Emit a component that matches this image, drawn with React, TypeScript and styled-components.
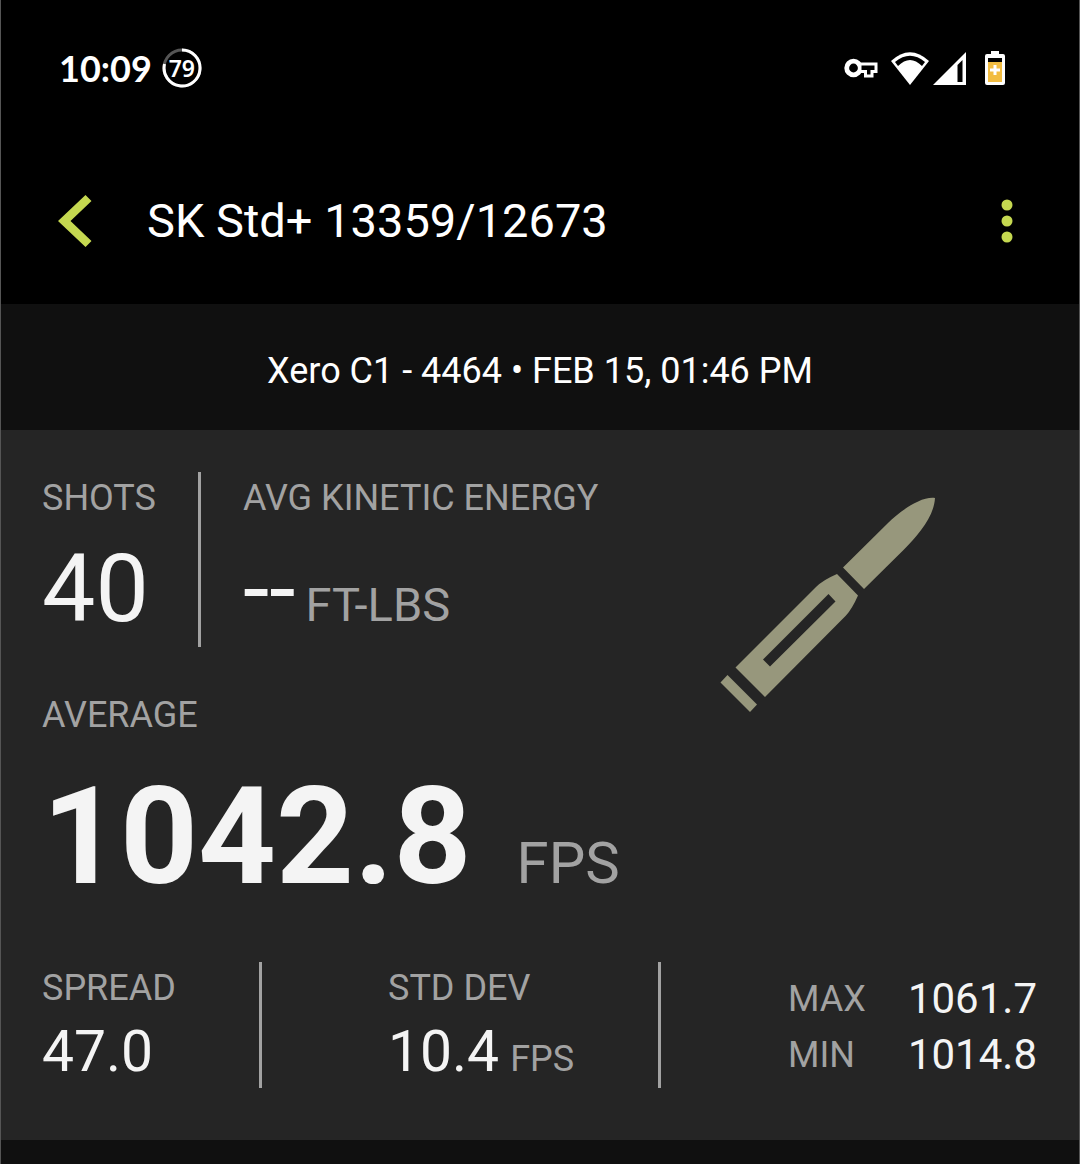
import React from "react";
import styled, { createGlobalStyle, css } from "styled-components";

const GlobalStyle = createGlobalStyle`
  *, *::before, *::after { box-sizing: border-box; }
  body {
    margin: 0;
    background: #101010;
    color: #fff;
    font-family: Roboto, "Liberation Sans", sans-serif;
  }
`;

const Screen = styled.div`
  min-height: 100vh;
  border: solid #555;
  border-width: 0 1px;
`;

const StatusBar = styled.header`
  display: flex;
  align-items: center;
  justify-content: space-between;
  height: 138px;
  padding: 0 74px 2px 58px;
  background: #000;
`;

const StatusGroup = styled.div<{ $gap: number }>`
  display: flex;
  align-items: center;
  gap: ${(p) => p.$gap}px;
`;

const Clock = styled.time`
  font: 700 36px/40px Lato, sans-serif;
`;

const BatteryRing = styled.div`
  display: grid;
  place-items: center;
  width: 40px;
  height: 40px;

  > * { grid-area: 1 / 1; }
`;

const RingLabel = styled.span`
  font: 600 23px/24px "Noto Sans", sans-serif;
`;

const AppBar = styled.nav`
  display: flex;
  align-items: center;
  height: 166px;
  padding: 0 55px 0 57px;
  background: #000;
`;

const IconButton = styled.button`
  display: grid;
  place-items: center;
  width: 34px;
  height: 64px;
  padding: 0;
  border: 0;
  background: none;
  color: #c5d850;
  cursor: pointer;
`;

const Title = styled.h1`
  flex: 1;
  margin: 0;
  padding-left: 55px;
  font-size: 47px;
  line-height: 56px;
  font-weight: 400;
`;

const SessionBar = styled.p`
  margin: 0;
  padding: 46px 42px 38px;
  background: #101010;
  font-size: 36px;
  line-height: 42px;
  text-align: center;
`;

const Panel = styled.main`
  padding: 42px 42px 52px 41px;
  background: #252525;
`;

const Overview = styled.div`
  display: flex;
  align-items: flex-start;
  justify-content: space-between;
`;

const Row = styled.div`
  display: flex;
  align-items: flex-start;
  margin-bottom: 42px;
`;

const ruled = css`
  border-right: 3px solid #a2a2a2;
`;

const Stat = styled.section<{ $ruled?: boolean }>`
  height: 175px;
  padding-right: 42px;
  ${(p) => p.$ruled && ruled}

  & + & { padding-left: 42px; }
`;

const Label = styled.h2`
  margin: 0;
  color: #a2a2a2;
  font-size: 36px;
  line-height: 52px;
  font-weight: 400;
`;

const Value = styled.p<{ $size: number; $line: number; $weight?: number }>`
  margin: 0;
  color: #f4f4f4;
  font-size: ${(p) => p.$size}px;
  line-height: ${(p) => p.$line}px;
  font-weight: ${(p) => p.$weight ?? 400};
  white-space: nowrap;
`;

const Unit = styled.span<{ $size: number; $gap: number }>`
  margin-left: ${(p) => p.$gap}px;
  color: #a2a2a2;
  font-size: ${(p) => p.$size}px;
  line-height: 1;
  font-weight: 400;
`;

const Cartridge = styled.svg`
  flex: none;
  margin: 25px 101px 0 0;
  color: #97977c;
`;

const Average = styled.section`
  margin-bottom: 29px;
`;

const Footer = styled.div`
  display: grid;
  grid-template-columns: 220px 399px 1fr;
`;

const Cell = styled.section<{ $ruled?: boolean; $inset?: number }>`
  height: 126px;
  padding-left: ${(p) => p.$inset ?? 0}px;
  ${(p) => p.$ruled && ruled}
`;

const Extremes = styled.dl`
  display: grid;
  grid-template-columns: 1fr auto;
  align-content: center;
  margin: 0;
  padding: 4px 0 0 127px;
  line-height: 56px;
`;

const Term = styled.dt`
  color: #a2a2a2;
  font-size: 36px;
`;

const Amount = styled.dd`
  margin: 0;
  color: #f4f4f4;
  font-size: 42px;
`;

const KeyIcon = () => (
  <svg width="34" height="20" viewBox="0 0 34 20" aria-hidden="true">
    <path d="M15 4.500H33.500V15H29.500V19.500H20V15H15Z" fill="#fff" />
    <circle cx="9.500" cy="10" r="6.800" fill="#000" stroke="#fff" strokeWidth="4.800" />
    <path d="M17.500 7.500H30.500V12H26.500V16.500H23V12H17.500Z" fill="#000" />
  </svg>
);

const WifiIcon = () => (
  <svg width="38" height="33" viewBox="0 0 38 33" aria-hidden="true">
    <path d="M0 9Q19-8.500 38 9L19 33Z" fill="#fff" />
    <path d="M4 10Q19-2.500 34 10L31 14Q19 2 7 14Z" fill="#000" />
  </svg>
);

const SignalIcon = () => (
  <svg width="33" height="33" viewBox="0 0 33 33" aria-hidden="true">
    <path d="M33 0V33H0Z" fill="#fff" />
    <path d="M24.500 13L29.500 8V30H24.500Z" fill="#000" />
  </svg>
);

const BatteryIcon = () => (
  <svg width="20" height="34" viewBox="0 0 20 34" aria-hidden="true">
    <path d="M6 0H14V3H18Q20 3 20 5V32Q20 34 18 34H2Q0 34 0 32V5Q0 3 2 3H6Z" fill="#fff" />
    <path d="M3 7H17V11H3Z" fill="#000" />
    <path d="M3 11H17V31H3Z" fill="#f2bd42" />
    <path d="M8.500 14H11.500V17.500H15V20.500H11.500V24H8.500V20.500H5V17.500H8.500Z" fill="#fff" />
  </svg>
);

export default function App() {
  return (
    <>
      <GlobalStyle />
      <Screen>
        <StatusBar>
          <StatusGroup $gap={10}>
            <Clock>10:09</Clock>
            <BatteryRing>
              <svg width="40" height="40" viewBox="0 0 40 40" fill="none" strokeWidth="3" aria-hidden="true">
                <circle cx="20" cy="20" r="18" stroke="#555" />
                <path d="M20 2A18 18 0 1 1 2.500 16" stroke="#fff" />
              </svg>
              <RingLabel>79</RingLabel>
            </BatteryRing>
          </StatusGroup>
          <StatusGroup $gap={19}>
            <StatusGroup $gap={13}>
              <KeyIcon />
              <StatusGroup $gap={4}>
                <WifiIcon />
                <SignalIcon />
              </StatusGroup>
            </StatusGroup>
            <BatteryIcon />
          </StatusGroup>
        </StatusBar>

        <AppBar>
          <IconButton aria-label="Back">
            <svg width="34" height="53" viewBox="0 0 34 53" fill="currentColor">
              <path d="M0 26L27.500 0L33.500 6L12.500 26L33.500 46L27.500 52Z" />
            </svg>
          </IconButton>
          <Title>SK Std+ 13359/12673</Title>
          <IconButton aria-label="More options">
            <svg width="12" height="44" viewBox="0 0 12 44" fill="currentColor">
              <circle cx="6" cy="6" r="5.500" />
              <circle cx="6" cy="22" r="5.500" />
              <circle cx="6" cy="38" r="5.500" />
            </svg>
          </IconButton>
        </AppBar>

        <SessionBar>Xero C1 - 4464 • FEB 15, 01:46 PM</SessionBar>

        <Panel>
          <Overview>
            <div>
              <Row>
                <Stat $ruled>
                  <Label>SHOTS</Label>
                  <Value $size={95} $line={130}>40</Value>
                </Stat>
                <Stat>
                  <Label>AVG KINETIC ENERGY</Label>
                  <Value $size={95} $line={130}>
                    --<Unit $size={47} $gap={10}>FT-LBS</Unit>
                  </Value>
                </Stat>
              </Row>
              <Average>
                <Label>AVERAGE</Label>
                <Value $size={136} $line={192} $weight={700}>
                  1042.8<Unit $size={58} $gap={45}>FPS</Unit>
                </Value>
              </Average>
            </div>
            <Cartridge width="216" height="216" viewBox="720 497 216 216" fill="currentColor" aria-hidden="true">
              <path d="M727.500 675L757 704.500L750 712L720.500 682.500Z" />
              <path fillRule="evenodd" d="M735.500 667.500L816 587Q823 580 837 574L858 595.500Q852 609 846 615.500L765 697ZM763 659.500L828.500 594L835.500 601.500L770 666.500Z" />
              <path d="M843 567.500L888 523C898 513 920 496 935 498C934 517 918 535 904 549.500L864 589Z" />
            </Cartridge>
          </Overview>

          <Footer>
            <Cell $ruled>
              <Label>SPREAD</Label>
              <Value $size={57} $line={76}>47.0</Value>
            </Cell>
            <Cell $ruled $inset={126}>
              <Label>STD DEV</Label>
              <Value $size={57} $line={76}>
                10.4<Unit $size={36} $gap={11}>FPS</Unit>
              </Value>
            </Cell>
            <Extremes>
              <Term>MAX</Term>
              <Amount>1061.7</Amount>
              <Term>MIN</Term>
              <Amount>1014.8</Amount>
            </Extremes>
          </Footer>
        </Panel>
      </Screen>
    </>
  );
}
